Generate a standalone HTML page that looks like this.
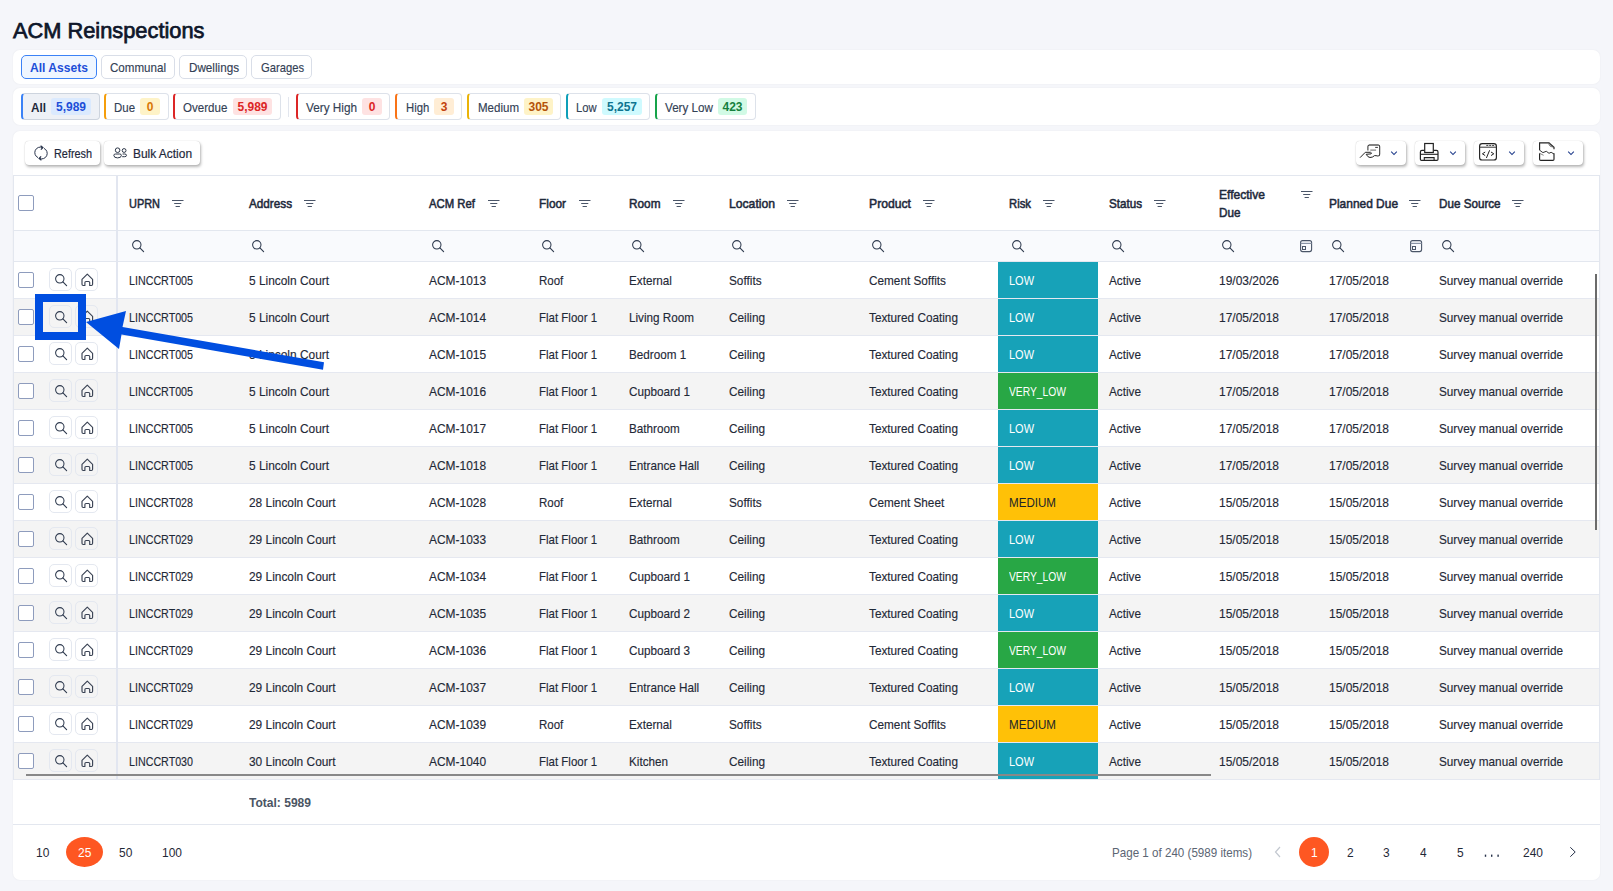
<!DOCTYPE html><html><head><meta charset="utf-8"><title>ACM Reinspections</title><style>
*{box-sizing:border-box;margin:0;padding:0}
html,body{width:1613px;height:891px;overflow:hidden}
body{background:#f5f6fa;font-family:"Liberation Sans",sans-serif;color:#1f2937;position:relative}
.a{position:absolute}
.t{position:absolute;white-space:nowrap}
.panel{position:absolute;left:13px;width:1587px;background:#fff;border-radius:7px;box-shadow:0 0 2px rgba(0,0,0,.06)}
.tab{position:absolute;top:55px;height:24px;border:1px solid #d9dee8;border-radius:5px;background:#fff}
.tab.on{border-color:#3b82f6;background:#eff6ff}
.chip{position:absolute;top:93px;height:27px;border:1px solid #dde2ea;border-left-width:2px;border-radius:4px;background:#fff}
.badge{position:absolute;top:98px;height:17px;border-radius:3px}
.btn{position:absolute;top:141px;height:24px;background:#fff;border-radius:4px;box-shadow:0 0 1px rgba(0,0,0,.25),1px 2px 3px rgba(0,0,0,.28)}
.row{position:absolute;left:14px;width:1585px;height:37px;border-bottom:1px solid #e5e8f0}
.cb{position:absolute;width:16px;height:16px;border:1.5px solid #8e9cbd;border-radius:2px;background:#fff}
.ab{position:absolute;width:23px;height:23px;border:1px solid #e4e8f0;border-radius:5px}
.ic{position:absolute;line-height:0}
</style></head><body>

<div class="t" style="left:13.00px;top:13.99px;font-size:22.4px;line-height:34px;color:#0f172a;transform:scaleX(0.9736);transform-origin:0 0;-webkit-text-stroke:0.75px #0f172a;">ACM Reinspections</div>
<div class="panel" style="top:50px;height:34px"></div>
<div class="tab on" style="left:21px;width:76px"></div>
<div class="t" style="left:30.30px;top:57.85px;font-size:13px;line-height:20px;font-weight:bold;color:#1d4ed8;transform:scaleX(0.9295);transform-origin:0 0;">All Assets</div>
<div class="tab" style="left:101px;width:74px"></div>
<div class="t" style="left:110.00px;top:57.85px;font-size:13px;line-height:20px;color:#334155;transform:scaleX(0.8910);transform-origin:0 0;-webkit-text-stroke:0.15px #334155;">Communal</div>
<div class="tab" style="left:179px;width:68px"></div>
<div class="t" style="left:188.50px;top:57.85px;font-size:13px;line-height:20px;color:#334155;transform:scaleX(0.8985);transform-origin:0 0;-webkit-text-stroke:0.15px #334155;">Dwellings</div>
<div class="tab" style="left:251px;width:61px"></div>
<div class="t" style="left:260.80px;top:57.85px;font-size:13px;line-height:20px;color:#334155;transform:scaleX(0.8626);transform-origin:0 0;-webkit-text-stroke:0.15px #334155;">Garages</div>
<div class="panel" style="top:88px;height:37px"></div>
<div class="chip" style="left:21px;width:79px;border-left-color:#3b82f6;background:#eef1f6;border-color:#cdd4de;border-left-color:#3b82f6;"></div>
<div class="t" style="left:31.00px;top:97.85px;font-size:13px;line-height:20px;font-weight:bold;color:#1e293b;transform:scaleX(0.9036);transform-origin:0 0;">All</div>
<div class="badge" style="left:51px;width:40px;background:#dbeafe"></div>
<div class="t" style="left:55.98px;top:98.19px;font-size:12px;line-height:18px;font-weight:bold;color:#1d4ed8;">5,989</div>
<div class="chip" style="left:104px;width:65px;border-left-color:#f59e0b;"></div>
<div class="t" style="left:114.30px;top:97.85px;font-size:13px;line-height:20px;color:#334155;transform:scaleX(0.8805);transform-origin:0 0;-webkit-text-stroke:0.15px #334155;">Due</div>
<div class="badge" style="left:140px;width:20px;background:#fef3c7"></div>
<div class="t" style="left:146.68px;top:98.19px;font-size:12px;line-height:18px;font-weight:bold;color:#d97706;">0</div>
<div class="chip" style="left:173px;width:108px;border-left-color:#dc2626;"></div>
<div class="t" style="left:183.40px;top:97.85px;font-size:13px;line-height:20px;color:#334155;transform:scaleX(0.8887);transform-origin:0 0;-webkit-text-stroke:0.15px #334155;">Overdue</div>
<div class="badge" style="left:233px;width:39px;background:#fee2e2"></div>
<div class="t" style="left:237.47px;top:98.19px;font-size:12px;line-height:18px;font-weight:bold;color:#dc2626;">5,989</div>
<div class="chip" style="left:296px;width:94px;border-left-color:#dc2626;"></div>
<div class="t" style="left:305.80px;top:97.85px;font-size:13px;line-height:20px;color:#334155;transform:scaleX(0.9051);transform-origin:0 0;-webkit-text-stroke:0.15px #334155;">Very High</div>
<div class="badge" style="left:362px;width:20px;background:#fee2e2"></div>
<div class="t" style="left:368.68px;top:98.19px;font-size:12px;line-height:18px;font-weight:bold;color:#dc2626;">0</div>
<div class="chip" style="left:395px;width:67px;border-left-color:#f97316;"></div>
<div class="t" style="left:405.70px;top:97.85px;font-size:13px;line-height:20px;color:#334155;transform:scaleX(0.8710);transform-origin:0 0;-webkit-text-stroke:0.15px #334155;">High</div>
<div class="badge" style="left:434px;width:20px;background:#ffedd5"></div>
<div class="t" style="left:440.68px;top:98.19px;font-size:12px;line-height:18px;font-weight:bold;color:#c2410c;">3</div>
<div class="chip" style="left:467px;width:94px;border-left-color:#eab308;"></div>
<div class="t" style="left:477.60px;top:97.85px;font-size:13px;line-height:20px;color:#334155;transform:scaleX(0.8865);transform-origin:0 0;-webkit-text-stroke:0.15px #334155;">Medium</div>
<div class="badge" style="left:524px;width:29px;background:#fef3c7"></div>
<div class="t" style="left:528.50px;top:98.19px;font-size:12px;line-height:18px;font-weight:bold;color:#b45309;">305</div>
<div class="chip" style="left:566px;width:84px;border-left-color:#0e9fb8;"></div>
<div class="t" style="left:576.30px;top:97.85px;font-size:13px;line-height:20px;color:#334155;transform:scaleX(0.8661);transform-origin:0 0;-webkit-text-stroke:0.15px #334155;">Low</div>
<div class="badge" style="left:602px;width:40px;background:#cffafe"></div>
<div class="t" style="left:606.98px;top:98.19px;font-size:12px;line-height:18px;font-weight:bold;color:#0e7490;">5,257</div>
<div class="chip" style="left:655px;width:101px;border-left-color:#16a34a;"></div>
<div class="t" style="left:664.90px;top:97.85px;font-size:13px;line-height:20px;color:#334155;transform:scaleX(0.8964);transform-origin:0 0;-webkit-text-stroke:0.15px #334155;">Very Low</div>
<div class="badge" style="left:718px;width:29px;background:#d1fae5"></div>
<div class="t" style="left:722.50px;top:98.19px;font-size:12px;line-height:18px;font-weight:bold;color:#15803d;">423</div>
<div class="a" style="left:288px;top:97px;width:1px;height:20px;background:#e2e6ee"></div>
<div class="panel" style="top:131px;height:749px"></div>
<div class="btn" style="left:25px;width:75px"></div>
<span class="ic" style="left:34px;top:145px"><svg width="14" height="16" viewBox="0 0 14 16"><path d="M8.6 2.6A5.4 5.4 0 0 0 4 12.6" fill="none" stroke="#27324a" stroke-width="1"/><path d="M5.4 13.4A5.4 5.4 0 0 0 10 3.4" fill="none" stroke="#27324a" stroke-width="1"/><path d="M6.6 0.8L8.9 2.5L6.9 4.6" fill="none" stroke="#27324a" stroke-width="1.2"/><path d="M7.4 15.2L5.1 13.5L7.1 11.4" fill="none" stroke="#27324a" stroke-width="1.2"/></svg></span>
<div class="t" style="left:53.80px;top:143.85px;font-size:13px;line-height:20px;color:#1e293b;transform:scaleX(0.8352);transform-origin:0 0;-webkit-text-stroke:0.2px #1e293b;">Refresh</div>
<div class="btn" style="left:104px;width:96px"></div>
<span class="ic" style="left:104px;top:140px"><svg width="50" height="24" viewBox="0 0 50 24"><circle cx="13.6" cy="10.2" r="2.3" fill="none" stroke="#2d3748" stroke-width="1"/><path d="M9.8 15.3Q9.8 14 11.6 14H15.6Q17.4 14 17.4 15.3Q17.4 17.9 13.6 17.9Q9.8 17.9 9.8 15.3Z" fill="none" stroke="#2d3748" stroke-width="1"/><circle cx="20.1" cy="10.5" r="1.9" fill="none" stroke="#2d3748" stroke-width="1"/><path d="M18.6 14H20.7Q22.5 14 22.5 15.3Q22.5 16.7 20.7 16.7H18.2" fill="none" stroke="#2d3748" stroke-width="1"/></svg></span>
<div class="t" style="left:132.80px;top:143.85px;font-size:13px;line-height:20px;color:#1e293b;transform:scaleX(0.9176);transform-origin:0 0;-webkit-text-stroke:0.2px #1e293b;">Bulk Action</div>
<div class="btn" style="left:1356px;width:50px"></div>
<span class="ic" style="left:1356px;top:140px"><svg width="50" height="24" viewBox="0 0 50 24"><path d="M35.2 11.6L38 14.6L40.8 11.6" fill="none" stroke="#1e3a8a" stroke-width="1.05"/><path d="M11.9 10.6V6.6Q11.9 4.9 13.6 4.9H22Q23.7 4.9 23.7 6.6V14.2Q23.7 15.9 22 15.9H21.4" fill="none" stroke="#333" stroke-width="1.05"/><path d="M13 5H22.6" stroke="#777" stroke-width="1.3"/><path d="M19.2 7.4H21.9" stroke="#222" stroke-width="0.9"/><path d="M14.3 10.1H20.1" stroke="#777" stroke-width="1.1"/><path d="M4 17.7L9.3 12.3H14.6Q16.2 12.8 15 13.9L10.2 14.3Q11.8 17.4 14 17.5Q16.5 17.6 18.6 15.6Q20 15.6 21.5 15.9" fill="none" stroke="#222" stroke-width="1"/></svg></span>
<div class="btn" style="left:1415px;width:50px"></div>
<span class="ic" style="left:1415px;top:140px"><svg width="50" height="24" viewBox="0 0 50 24"><path d="M35.2 11.6L38 14.6L40.8 11.6" fill="none" stroke="#1e3a8a" stroke-width="1.05"/><rect x="9.7" y="3.5" width="8.6" height="9" fill="none" stroke="#222" stroke-width="1.2"/><path d="M9.2 10.3H7Q5.4 10.3 5.4 12V19.2Q5.4 20.3 6.5 20.3H21.9Q23 20.3 23 19.2V12Q23 10.3 21.4 10.3H18.8" fill="none" stroke="#222" stroke-width="1.2"/><path d="M5.4 14.3H23" stroke="#222" stroke-width="1.1"/><path d="M9.3 20.2V17.6H19.1V20.2" fill="none" stroke="#222" stroke-width="1.1"/></svg></span>
<div class="btn" style="left:1474px;width:50px"></div>
<span class="ic" style="left:1474px;top:140px"><svg width="50" height="24" viewBox="0 0 50 24"><path d="M35.2 11.6L38 14.6L40.8 11.6" fill="none" stroke="#1e3a8a" stroke-width="1.05"/><rect x="5.6" y="3.6" width="16.8" height="16.4" rx="2.6" fill="none" stroke="#222" stroke-width="1.15"/><path d="M5.6 7.2H22.4" stroke="#333" stroke-width="1"/><path d="M12.3 5.4H21.1" stroke="#222" stroke-width="0.9" stroke-dasharray="2 0.9"/><path d="M11.2 12L8.4 13.8L11.2 15.6M17 12L19.8 13.8L17 15.6M15.6 10.3L12.4 18" fill="none" stroke="#222" stroke-width="1"/></svg></span>
<div class="btn" style="left:1533px;width:50px"></div>
<span class="ic" style="left:1533px;top:140px"><svg width="50" height="24" viewBox="0 0 50 24"><path d="M35.2 11.6L38 14.6L40.8 11.6" fill="none" stroke="#1e3a8a" stroke-width="1.05"/><path d="M6.6 10.2V2.9H16L21 7.2V9.2M21 13.3V19.2Q21 20.3 19.9 20.3H7.7Q6.6 20.3 6.6 19.2V13.3" fill="none" stroke="#222" stroke-width="1.15"/><path d="M16 2.9Q15.6 6.8 20.8 7" fill="none" stroke="#555" stroke-width="1"/><path d="M6.6 10.2L9.9 12.6L13.3 11.3L16 13.3L18.1 12.3L21 14" fill="none" stroke="#333" stroke-width="1"/><path d="M6.6 13.3L10.6 15.3" fill="none" stroke="#777" stroke-width="0.9"/></svg></span>
<div class="a" style="left:13px;top:175px;width:1587px;height:1px;background:#e3e7ef"></div>
<div class="a" style="left:13px;top:175px;width:1px;height:605px;background:#e3e7ef"></div>
<div class="a" style="left:1599px;top:175px;width:1px;height:605px;background:#e3e7ef"></div>
<div class="a" style="left:14px;top:230px;width:1585px;height:1px;background:#e3e7ef"></div>
<div class="a" style="left:14px;top:231px;width:1585px;height:30px;background:#f9fafd"></div>
<div class="a" style="left:14px;top:261px;width:1585px;height:1px;background:#e3e7ef"></div>
<div class="cb" style="left:18px;top:195px"></div>
<div class="t" style="left:129.00px;top:193.85px;font-size:13px;line-height:20px;color:#1e293b;transform:scaleX(0.8412);transform-origin:0 0;-webkit-text-stroke:0.55px #1e293b;">UPRN</div>
<span class="ic" style="left:172px;top:200px"><svg width="12" height="8" viewBox="0 0 12 8"><path d="M0 0.5H11.5M2.2 3.5H9.3M3.6 6.5H7.9" stroke="#4a5568" stroke-width="1"/></svg></span>
<span class="ic" style="left:132px;top:240px"><svg width="13" height="13" viewBox="0 0 13 13"><circle cx="4.8" cy="4.8" r="4.2" fill="none" stroke="#2f3b4f" stroke-width="1.05"/><path d="M7.9 7.9L11.6 11.6" stroke="#2f3b4f" stroke-width="1.15" stroke-linecap="round"/></svg></span>
<div class="t" style="left:249.00px;top:193.85px;font-size:13px;line-height:20px;color:#1e293b;transform:scaleX(0.9015);transform-origin:0 0;-webkit-text-stroke:0.55px #1e293b;">Address</div>
<span class="ic" style="left:304px;top:200px"><svg width="12" height="8" viewBox="0 0 12 8"><path d="M0 0.5H11.5M2.2 3.5H9.3M3.6 6.5H7.9" stroke="#4a5568" stroke-width="1"/></svg></span>
<span class="ic" style="left:252px;top:240px"><svg width="13" height="13" viewBox="0 0 13 13"><circle cx="4.8" cy="4.8" r="4.2" fill="none" stroke="#2f3b4f" stroke-width="1.05"/><path d="M7.9 7.9L11.6 11.6" stroke="#2f3b4f" stroke-width="1.15" stroke-linecap="round"/></svg></span>
<div class="t" style="left:429.00px;top:193.85px;font-size:13px;line-height:20px;color:#1e293b;transform:scaleX(0.8720);transform-origin:0 0;-webkit-text-stroke:0.55px #1e293b;">ACM Ref</div>
<span class="ic" style="left:488px;top:200px"><svg width="12" height="8" viewBox="0 0 12 8"><path d="M0 0.5H11.5M2.2 3.5H9.3M3.6 6.5H7.9" stroke="#4a5568" stroke-width="1"/></svg></span>
<span class="ic" style="left:432px;top:240px"><svg width="13" height="13" viewBox="0 0 13 13"><circle cx="4.8" cy="4.8" r="4.2" fill="none" stroke="#2f3b4f" stroke-width="1.05"/><path d="M7.9 7.9L11.6 11.6" stroke="#2f3b4f" stroke-width="1.15" stroke-linecap="round"/></svg></span>
<div class="t" style="left:539.00px;top:193.85px;font-size:13px;line-height:20px;color:#1e293b;transform:scaleX(0.9122);transform-origin:0 0;-webkit-text-stroke:0.55px #1e293b;">Floor</div>
<span class="ic" style="left:579px;top:200px"><svg width="12" height="8" viewBox="0 0 12 8"><path d="M0 0.5H11.5M2.2 3.5H9.3M3.6 6.5H7.9" stroke="#4a5568" stroke-width="1"/></svg></span>
<span class="ic" style="left:542px;top:240px"><svg width="13" height="13" viewBox="0 0 13 13"><circle cx="4.8" cy="4.8" r="4.2" fill="none" stroke="#2f3b4f" stroke-width="1.05"/><path d="M7.9 7.9L11.6 11.6" stroke="#2f3b4f" stroke-width="1.15" stroke-linecap="round"/></svg></span>
<div class="t" style="left:629.00px;top:193.85px;font-size:13px;line-height:20px;color:#1e293b;transform:scaleX(0.9078);transform-origin:0 0;-webkit-text-stroke:0.55px #1e293b;">Room</div>
<span class="ic" style="left:673px;top:200px"><svg width="12" height="8" viewBox="0 0 12 8"><path d="M0 0.5H11.5M2.2 3.5H9.3M3.6 6.5H7.9" stroke="#4a5568" stroke-width="1"/></svg></span>
<span class="ic" style="left:632px;top:240px"><svg width="13" height="13" viewBox="0 0 13 13"><circle cx="4.8" cy="4.8" r="4.2" fill="none" stroke="#2f3b4f" stroke-width="1.05"/><path d="M7.9 7.9L11.6 11.6" stroke="#2f3b4f" stroke-width="1.15" stroke-linecap="round"/></svg></span>
<div class="t" style="left:729.00px;top:193.85px;font-size:13px;line-height:20px;color:#1e293b;transform:scaleX(0.9359);transform-origin:0 0;-webkit-text-stroke:0.55px #1e293b;">Location</div>
<span class="ic" style="left:787px;top:200px"><svg width="12" height="8" viewBox="0 0 12 8"><path d="M0 0.5H11.5M2.2 3.5H9.3M3.6 6.5H7.9" stroke="#4a5568" stroke-width="1"/></svg></span>
<span class="ic" style="left:732px;top:240px"><svg width="13" height="13" viewBox="0 0 13 13"><circle cx="4.8" cy="4.8" r="4.2" fill="none" stroke="#2f3b4f" stroke-width="1.05"/><path d="M7.9 7.9L11.6 11.6" stroke="#2f3b4f" stroke-width="1.15" stroke-linecap="round"/></svg></span>
<div class="t" style="left:869.00px;top:193.85px;font-size:13px;line-height:20px;color:#1e293b;transform:scaleX(0.9375);transform-origin:0 0;-webkit-text-stroke:0.55px #1e293b;">Product</div>
<span class="ic" style="left:923px;top:200px"><svg width="12" height="8" viewBox="0 0 12 8"><path d="M0 0.5H11.5M2.2 3.5H9.3M3.6 6.5H7.9" stroke="#4a5568" stroke-width="1"/></svg></span>
<span class="ic" style="left:872px;top:240px"><svg width="13" height="13" viewBox="0 0 13 13"><circle cx="4.8" cy="4.8" r="4.2" fill="none" stroke="#2f3b4f" stroke-width="1.05"/><path d="M7.9 7.9L11.6 11.6" stroke="#2f3b4f" stroke-width="1.15" stroke-linecap="round"/></svg></span>
<div class="t" style="left:1009.00px;top:193.85px;font-size:13px;line-height:20px;color:#1e293b;transform:scaleX(0.8679);transform-origin:0 0;-webkit-text-stroke:0.55px #1e293b;">Risk</div>
<span class="ic" style="left:1043px;top:200px"><svg width="12" height="8" viewBox="0 0 12 8"><path d="M0 0.5H11.5M2.2 3.5H9.3M3.6 6.5H7.9" stroke="#4a5568" stroke-width="1"/></svg></span>
<span class="ic" style="left:1012px;top:240px"><svg width="13" height="13" viewBox="0 0 13 13"><circle cx="4.8" cy="4.8" r="4.2" fill="none" stroke="#2f3b4f" stroke-width="1.05"/><path d="M7.9 7.9L11.6 11.6" stroke="#2f3b4f" stroke-width="1.15" stroke-linecap="round"/></svg></span>
<div class="t" style="left:1109.00px;top:193.85px;font-size:13px;line-height:20px;color:#1e293b;transform:scaleX(0.8955);transform-origin:0 0;-webkit-text-stroke:0.55px #1e293b;">Status</div>
<span class="ic" style="left:1154px;top:200px"><svg width="12" height="8" viewBox="0 0 12 8"><path d="M0 0.5H11.5M2.2 3.5H9.3M3.6 6.5H7.9" stroke="#4a5568" stroke-width="1"/></svg></span>
<span class="ic" style="left:1112px;top:240px"><svg width="13" height="13" viewBox="0 0 13 13"><circle cx="4.8" cy="4.8" r="4.2" fill="none" stroke="#2f3b4f" stroke-width="1.05"/><path d="M7.9 7.9L11.6 11.6" stroke="#2f3b4f" stroke-width="1.15" stroke-linecap="round"/></svg></span>
<div class="t" style="left:1219.00px;top:184.85px;font-size:13px;line-height:20px;color:#1e293b;transform:scaleX(0.9274);transform-origin:0 0;-webkit-text-stroke:0.55px #1e293b;">Effective</div>
<div class="t" style="left:1219.00px;top:202.85px;font-size:13px;line-height:20px;color:#1e293b;transform:scaleX(0.9015);transform-origin:0 0;-webkit-text-stroke:0.55px #1e293b;">Due</div>
<span class="ic" style="left:1301px;top:191px"><svg width="12" height="8" viewBox="0 0 12 8"><path d="M0 0.5H11.5M2.2 3.5H9.3M3.6 6.5H7.9" stroke="#4a5568" stroke-width="1"/></svg></span>
<span class="ic" style="left:1222px;top:240px"><svg width="13" height="13" viewBox="0 0 13 13"><circle cx="4.8" cy="4.8" r="4.2" fill="none" stroke="#2f3b4f" stroke-width="1.05"/><path d="M7.9 7.9L11.6 11.6" stroke="#2f3b4f" stroke-width="1.15" stroke-linecap="round"/></svg></span>
<div class="t" style="left:1329.00px;top:193.85px;font-size:13px;line-height:20px;color:#1e293b;transform:scaleX(0.9182);transform-origin:0 0;-webkit-text-stroke:0.55px #1e293b;">Planned Due</div>
<span class="ic" style="left:1409px;top:200px"><svg width="12" height="8" viewBox="0 0 12 8"><path d="M0 0.5H11.5M2.2 3.5H9.3M3.6 6.5H7.9" stroke="#4a5568" stroke-width="1"/></svg></span>
<span class="ic" style="left:1332px;top:240px"><svg width="13" height="13" viewBox="0 0 13 13"><circle cx="4.8" cy="4.8" r="4.2" fill="none" stroke="#2f3b4f" stroke-width="1.05"/><path d="M7.9 7.9L11.6 11.6" stroke="#2f3b4f" stroke-width="1.15" stroke-linecap="round"/></svg></span>
<div class="t" style="left:1439.00px;top:193.85px;font-size:13px;line-height:20px;color:#1e293b;transform:scaleX(0.8973);transform-origin:0 0;-webkit-text-stroke:0.55px #1e293b;">Due Source</div>
<span class="ic" style="left:1512px;top:200px"><svg width="12" height="8" viewBox="0 0 12 8"><path d="M0 0.5H11.5M2.2 3.5H9.3M3.6 6.5H7.9" stroke="#4a5568" stroke-width="1"/></svg></span>
<span class="ic" style="left:1442px;top:240px"><svg width="13" height="13" viewBox="0 0 13 13"><circle cx="4.8" cy="4.8" r="4.2" fill="none" stroke="#2f3b4f" stroke-width="1.05"/><path d="M7.9 7.9L11.6 11.6" stroke="#2f3b4f" stroke-width="1.15" stroke-linecap="round"/></svg></span>
<span class="ic" style="left:1300px;top:240px"><svg width="13" height="13" viewBox="0 0 13 13"><rect x="0.6" y="0.6" width="11" height="11" rx="2" fill="none" stroke="#4a5568" stroke-width="1.1"/><path d="M0.6 3.4H11.6" stroke="#8a94a6" stroke-width="1.2"/><rect x="2.5" y="6.5" width="3" height="3" fill="none" stroke="#4a5568" stroke-width="1"/></svg></span>
<span class="ic" style="left:1410px;top:240px"><svg width="13" height="13" viewBox="0 0 13 13"><rect x="0.6" y="0.6" width="11" height="11" rx="2" fill="none" stroke="#4a5568" stroke-width="1.1"/><path d="M0.6 3.4H11.6" stroke="#8a94a6" stroke-width="1.2"/><rect x="2.5" y="6.5" width="3" height="3" fill="none" stroke="#4a5568" stroke-width="1"/></svg></span>
<div class="row" style="top:262px;background:#ffffff"></div>
<div class="cb" style="left:18px;top:272px"></div>
<div class="ab" style="left:49px;top:268px"></div><span class="ic" style="left:55px;top:274px"><svg width="13" height="13" viewBox="0 0 13 13"><circle cx="4.8" cy="4.8" r="4.2" fill="none" stroke="#2f3b4f" stroke-width="1.05"/><path d="M7.9 7.9L11.6 11.6" stroke="#2f3b4f" stroke-width="1.15" stroke-linecap="round"/></svg></span>
<div class="ab" style="left:75px;top:268px"></div><span class="ic" style="left:80.5px;top:273px"><svg width="13" height="14" viewBox="0 0 13 14"><path d="M1 6.3L6.3 1.2L11.6 6.3V11.3Q11.6 12.5 10.4 12.5H8.7V9.6Q8.7 8.5 7.6 8.5H5Q3.9 8.5 3.9 9.6V12.5H2.2Q1 12.5 1 11.3Z" fill="none" stroke="#3a4354" stroke-width="1.15" stroke-linejoin="round"/></svg></span>
<div class="t" style="left:129.00px;top:270.85px;font-size:13px;line-height:20px;color:#1f2937;transform:scaleX(0.8230);transform-origin:0 0;-webkit-text-stroke:0.15px #1f2937;">LINCCRT005</div>
<div class="t" style="left:249.00px;top:270.85px;font-size:13px;line-height:20px;color:#1f2937;transform:scaleX(0.9150);transform-origin:0 0;-webkit-text-stroke:0.15px #1f2937;">5 Lincoln Court</div>
<div class="t" style="left:429.00px;top:270.85px;font-size:13px;line-height:20px;color:#1f2937;transform:scaleX(0.9180);transform-origin:0 0;-webkit-text-stroke:0.15px #1f2937;">ACM-1013</div>
<div class="t" style="left:539.00px;top:270.85px;font-size:13px;line-height:20px;color:#1f2937;transform:scaleX(0.8830);transform-origin:0 0;-webkit-text-stroke:0.15px #1f2937;">Roof</div>
<div class="t" style="left:629.00px;top:270.85px;font-size:13px;line-height:20px;color:#1f2937;transform:scaleX(0.8990);transform-origin:0 0;-webkit-text-stroke:0.15px #1f2937;">External</div>
<div class="t" style="left:729.00px;top:270.85px;font-size:13px;line-height:20px;color:#1f2937;transform:scaleX(0.9070);transform-origin:0 0;-webkit-text-stroke:0.15px #1f2937;">Soffits</div>
<div class="t" style="left:869.00px;top:270.85px;font-size:13px;line-height:20px;color:#1f2937;transform:scaleX(0.9050);transform-origin:0 0;-webkit-text-stroke:0.15px #1f2937;">Cement Soffits</div>
<div class="a" style="left:998px;top:262px;width:100px;height:36px;background:#17a2b8"></div>
<div class="t" style="left:1009.00px;top:270.85px;font-size:13px;line-height:20px;color:#ffffff;transform:scaleX(0.8446);transform-origin:0 0;">LOW</div>
<div class="t" style="left:1109.00px;top:270.85px;font-size:13px;line-height:20px;color:#1f2937;transform:scaleX(0.9040);transform-origin:0 0;-webkit-text-stroke:0.15px #1f2937;">Active</div>
<div class="t" style="left:1219.00px;top:270.85px;font-size:13px;line-height:20px;color:#1f2937;transform:scaleX(0.9220);transform-origin:0 0;-webkit-text-stroke:0.15px #1f2937;">19/03/2026</div>
<div class="t" style="left:1329.00px;top:270.85px;font-size:13px;line-height:20px;color:#1f2937;transform:scaleX(0.9220);transform-origin:0 0;-webkit-text-stroke:0.15px #1f2937;">17/05/2018</div>
<div class="t" style="left:1439.00px;top:270.85px;font-size:13px;line-height:20px;color:#1f2937;transform:scaleX(0.9030);transform-origin:0 0;-webkit-text-stroke:0.15px #1f2937;">Survey manual override</div>
<div class="row" style="top:299px;background:#f4f4f4"></div>
<div class="cb" style="left:18px;top:309px"></div>
<div class="ab" style="left:49px;top:305px"></div><span class="ic" style="left:55px;top:311px"><svg width="13" height="13" viewBox="0 0 13 13"><circle cx="4.8" cy="4.8" r="4.2" fill="none" stroke="#2f3b4f" stroke-width="1.05"/><path d="M7.9 7.9L11.6 11.6" stroke="#2f3b4f" stroke-width="1.15" stroke-linecap="round"/></svg></span>
<div class="ab" style="left:75px;top:305px"></div><span class="ic" style="left:80.5px;top:310px"><svg width="13" height="14" viewBox="0 0 13 14"><path d="M1 6.3L6.3 1.2L11.6 6.3V11.3Q11.6 12.5 10.4 12.5H8.7V9.6Q8.7 8.5 7.6 8.5H5Q3.9 8.5 3.9 9.6V12.5H2.2Q1 12.5 1 11.3Z" fill="none" stroke="#3a4354" stroke-width="1.15" stroke-linejoin="round"/></svg></span>
<div class="t" style="left:129.00px;top:307.85px;font-size:13px;line-height:20px;color:#1f2937;transform:scaleX(0.8230);transform-origin:0 0;-webkit-text-stroke:0.15px #1f2937;">LINCCRT005</div>
<div class="t" style="left:249.00px;top:307.85px;font-size:13px;line-height:20px;color:#1f2937;transform:scaleX(0.9150);transform-origin:0 0;-webkit-text-stroke:0.15px #1f2937;">5 Lincoln Court</div>
<div class="t" style="left:429.00px;top:307.85px;font-size:13px;line-height:20px;color:#1f2937;transform:scaleX(0.9180);transform-origin:0 0;-webkit-text-stroke:0.15px #1f2937;">ACM-1014</div>
<div class="t" style="left:539.00px;top:307.85px;font-size:13px;line-height:20px;color:#1f2937;transform:scaleX(0.8830);transform-origin:0 0;-webkit-text-stroke:0.15px #1f2937;">Flat Floor 1</div>
<div class="t" style="left:629.00px;top:307.85px;font-size:13px;line-height:20px;color:#1f2937;transform:scaleX(0.8990);transform-origin:0 0;-webkit-text-stroke:0.15px #1f2937;">Living Room</div>
<div class="t" style="left:729.00px;top:307.85px;font-size:13px;line-height:20px;color:#1f2937;transform:scaleX(0.9070);transform-origin:0 0;-webkit-text-stroke:0.15px #1f2937;">Ceiling</div>
<div class="t" style="left:869.00px;top:307.85px;font-size:13px;line-height:20px;color:#1f2937;transform:scaleX(0.9050);transform-origin:0 0;-webkit-text-stroke:0.15px #1f2937;">Textured Coating</div>
<div class="a" style="left:998px;top:299px;width:100px;height:36px;background:#17a2b8"></div>
<div class="t" style="left:1009.00px;top:307.85px;font-size:13px;line-height:20px;color:#ffffff;transform:scaleX(0.8446);transform-origin:0 0;">LOW</div>
<div class="t" style="left:1109.00px;top:307.85px;font-size:13px;line-height:20px;color:#1f2937;transform:scaleX(0.9040);transform-origin:0 0;-webkit-text-stroke:0.15px #1f2937;">Active</div>
<div class="t" style="left:1219.00px;top:307.85px;font-size:13px;line-height:20px;color:#1f2937;transform:scaleX(0.9220);transform-origin:0 0;-webkit-text-stroke:0.15px #1f2937;">17/05/2018</div>
<div class="t" style="left:1329.00px;top:307.85px;font-size:13px;line-height:20px;color:#1f2937;transform:scaleX(0.9220);transform-origin:0 0;-webkit-text-stroke:0.15px #1f2937;">17/05/2018</div>
<div class="t" style="left:1439.00px;top:307.85px;font-size:13px;line-height:20px;color:#1f2937;transform:scaleX(0.9030);transform-origin:0 0;-webkit-text-stroke:0.15px #1f2937;">Survey manual override</div>
<div class="row" style="top:336px;background:#ffffff"></div>
<div class="cb" style="left:18px;top:346px"></div>
<div class="ab" style="left:49px;top:342px"></div><span class="ic" style="left:55px;top:348px"><svg width="13" height="13" viewBox="0 0 13 13"><circle cx="4.8" cy="4.8" r="4.2" fill="none" stroke="#2f3b4f" stroke-width="1.05"/><path d="M7.9 7.9L11.6 11.6" stroke="#2f3b4f" stroke-width="1.15" stroke-linecap="round"/></svg></span>
<div class="ab" style="left:75px;top:342px"></div><span class="ic" style="left:80.5px;top:347px"><svg width="13" height="14" viewBox="0 0 13 14"><path d="M1 6.3L6.3 1.2L11.6 6.3V11.3Q11.6 12.5 10.4 12.5H8.7V9.6Q8.7 8.5 7.6 8.5H5Q3.9 8.5 3.9 9.6V12.5H2.2Q1 12.5 1 11.3Z" fill="none" stroke="#3a4354" stroke-width="1.15" stroke-linejoin="round"/></svg></span>
<div class="t" style="left:129.00px;top:344.85px;font-size:13px;line-height:20px;color:#1f2937;transform:scaleX(0.8230);transform-origin:0 0;-webkit-text-stroke:0.15px #1f2937;">LINCCRT005</div>
<div class="t" style="left:249.00px;top:344.85px;font-size:13px;line-height:20px;color:#1f2937;transform:scaleX(0.9150);transform-origin:0 0;-webkit-text-stroke:0.15px #1f2937;">5 Lincoln Court</div>
<div class="t" style="left:429.00px;top:344.85px;font-size:13px;line-height:20px;color:#1f2937;transform:scaleX(0.9180);transform-origin:0 0;-webkit-text-stroke:0.15px #1f2937;">ACM-1015</div>
<div class="t" style="left:539.00px;top:344.85px;font-size:13px;line-height:20px;color:#1f2937;transform:scaleX(0.8830);transform-origin:0 0;-webkit-text-stroke:0.15px #1f2937;">Flat Floor 1</div>
<div class="t" style="left:629.00px;top:344.85px;font-size:13px;line-height:20px;color:#1f2937;transform:scaleX(0.8990);transform-origin:0 0;-webkit-text-stroke:0.15px #1f2937;">Bedroom 1</div>
<div class="t" style="left:729.00px;top:344.85px;font-size:13px;line-height:20px;color:#1f2937;transform:scaleX(0.9070);transform-origin:0 0;-webkit-text-stroke:0.15px #1f2937;">Ceiling</div>
<div class="t" style="left:869.00px;top:344.85px;font-size:13px;line-height:20px;color:#1f2937;transform:scaleX(0.9050);transform-origin:0 0;-webkit-text-stroke:0.15px #1f2937;">Textured Coating</div>
<div class="a" style="left:998px;top:336px;width:100px;height:36px;background:#17a2b8"></div>
<div class="t" style="left:1009.00px;top:344.85px;font-size:13px;line-height:20px;color:#ffffff;transform:scaleX(0.8446);transform-origin:0 0;">LOW</div>
<div class="t" style="left:1109.00px;top:344.85px;font-size:13px;line-height:20px;color:#1f2937;transform:scaleX(0.9040);transform-origin:0 0;-webkit-text-stroke:0.15px #1f2937;">Active</div>
<div class="t" style="left:1219.00px;top:344.85px;font-size:13px;line-height:20px;color:#1f2937;transform:scaleX(0.9220);transform-origin:0 0;-webkit-text-stroke:0.15px #1f2937;">17/05/2018</div>
<div class="t" style="left:1329.00px;top:344.85px;font-size:13px;line-height:20px;color:#1f2937;transform:scaleX(0.9220);transform-origin:0 0;-webkit-text-stroke:0.15px #1f2937;">17/05/2018</div>
<div class="t" style="left:1439.00px;top:344.85px;font-size:13px;line-height:20px;color:#1f2937;transform:scaleX(0.9030);transform-origin:0 0;-webkit-text-stroke:0.15px #1f2937;">Survey manual override</div>
<div class="row" style="top:373px;background:#f4f4f4"></div>
<div class="cb" style="left:18px;top:383px"></div>
<div class="ab" style="left:49px;top:379px"></div><span class="ic" style="left:55px;top:385px"><svg width="13" height="13" viewBox="0 0 13 13"><circle cx="4.8" cy="4.8" r="4.2" fill="none" stroke="#2f3b4f" stroke-width="1.05"/><path d="M7.9 7.9L11.6 11.6" stroke="#2f3b4f" stroke-width="1.15" stroke-linecap="round"/></svg></span>
<div class="ab" style="left:75px;top:379px"></div><span class="ic" style="left:80.5px;top:384px"><svg width="13" height="14" viewBox="0 0 13 14"><path d="M1 6.3L6.3 1.2L11.6 6.3V11.3Q11.6 12.5 10.4 12.5H8.7V9.6Q8.7 8.5 7.6 8.5H5Q3.9 8.5 3.9 9.6V12.5H2.2Q1 12.5 1 11.3Z" fill="none" stroke="#3a4354" stroke-width="1.15" stroke-linejoin="round"/></svg></span>
<div class="t" style="left:129.00px;top:381.85px;font-size:13px;line-height:20px;color:#1f2937;transform:scaleX(0.8230);transform-origin:0 0;-webkit-text-stroke:0.15px #1f2937;">LINCCRT005</div>
<div class="t" style="left:249.00px;top:381.85px;font-size:13px;line-height:20px;color:#1f2937;transform:scaleX(0.9150);transform-origin:0 0;-webkit-text-stroke:0.15px #1f2937;">5 Lincoln Court</div>
<div class="t" style="left:429.00px;top:381.85px;font-size:13px;line-height:20px;color:#1f2937;transform:scaleX(0.9180);transform-origin:0 0;-webkit-text-stroke:0.15px #1f2937;">ACM-1016</div>
<div class="t" style="left:539.00px;top:381.85px;font-size:13px;line-height:20px;color:#1f2937;transform:scaleX(0.8830);transform-origin:0 0;-webkit-text-stroke:0.15px #1f2937;">Flat Floor 1</div>
<div class="t" style="left:629.00px;top:381.85px;font-size:13px;line-height:20px;color:#1f2937;transform:scaleX(0.8990);transform-origin:0 0;-webkit-text-stroke:0.15px #1f2937;">Cupboard 1</div>
<div class="t" style="left:729.00px;top:381.85px;font-size:13px;line-height:20px;color:#1f2937;transform:scaleX(0.9070);transform-origin:0 0;-webkit-text-stroke:0.15px #1f2937;">Ceiling</div>
<div class="t" style="left:869.00px;top:381.85px;font-size:13px;line-height:20px;color:#1f2937;transform:scaleX(0.9050);transform-origin:0 0;-webkit-text-stroke:0.15px #1f2937;">Textured Coating</div>
<div class="a" style="left:998px;top:373px;width:100px;height:36px;background:#28a745"></div>
<div class="t" style="left:1009.00px;top:381.85px;font-size:13px;line-height:20px;color:#ffffff;transform:scaleX(0.7917);transform-origin:0 0;">VERY_LOW</div>
<div class="t" style="left:1109.00px;top:381.85px;font-size:13px;line-height:20px;color:#1f2937;transform:scaleX(0.9040);transform-origin:0 0;-webkit-text-stroke:0.15px #1f2937;">Active</div>
<div class="t" style="left:1219.00px;top:381.85px;font-size:13px;line-height:20px;color:#1f2937;transform:scaleX(0.9220);transform-origin:0 0;-webkit-text-stroke:0.15px #1f2937;">17/05/2018</div>
<div class="t" style="left:1329.00px;top:381.85px;font-size:13px;line-height:20px;color:#1f2937;transform:scaleX(0.9220);transform-origin:0 0;-webkit-text-stroke:0.15px #1f2937;">17/05/2018</div>
<div class="t" style="left:1439.00px;top:381.85px;font-size:13px;line-height:20px;color:#1f2937;transform:scaleX(0.9030);transform-origin:0 0;-webkit-text-stroke:0.15px #1f2937;">Survey manual override</div>
<div class="row" style="top:410px;background:#ffffff"></div>
<div class="cb" style="left:18px;top:420px"></div>
<div class="ab" style="left:49px;top:416px"></div><span class="ic" style="left:55px;top:422px"><svg width="13" height="13" viewBox="0 0 13 13"><circle cx="4.8" cy="4.8" r="4.2" fill="none" stroke="#2f3b4f" stroke-width="1.05"/><path d="M7.9 7.9L11.6 11.6" stroke="#2f3b4f" stroke-width="1.15" stroke-linecap="round"/></svg></span>
<div class="ab" style="left:75px;top:416px"></div><span class="ic" style="left:80.5px;top:421px"><svg width="13" height="14" viewBox="0 0 13 14"><path d="M1 6.3L6.3 1.2L11.6 6.3V11.3Q11.6 12.5 10.4 12.5H8.7V9.6Q8.7 8.5 7.6 8.5H5Q3.9 8.5 3.9 9.6V12.5H2.2Q1 12.5 1 11.3Z" fill="none" stroke="#3a4354" stroke-width="1.15" stroke-linejoin="round"/></svg></span>
<div class="t" style="left:129.00px;top:418.85px;font-size:13px;line-height:20px;color:#1f2937;transform:scaleX(0.8230);transform-origin:0 0;-webkit-text-stroke:0.15px #1f2937;">LINCCRT005</div>
<div class="t" style="left:249.00px;top:418.85px;font-size:13px;line-height:20px;color:#1f2937;transform:scaleX(0.9150);transform-origin:0 0;-webkit-text-stroke:0.15px #1f2937;">5 Lincoln Court</div>
<div class="t" style="left:429.00px;top:418.85px;font-size:13px;line-height:20px;color:#1f2937;transform:scaleX(0.9180);transform-origin:0 0;-webkit-text-stroke:0.15px #1f2937;">ACM-1017</div>
<div class="t" style="left:539.00px;top:418.85px;font-size:13px;line-height:20px;color:#1f2937;transform:scaleX(0.8830);transform-origin:0 0;-webkit-text-stroke:0.15px #1f2937;">Flat Floor 1</div>
<div class="t" style="left:629.00px;top:418.85px;font-size:13px;line-height:20px;color:#1f2937;transform:scaleX(0.8990);transform-origin:0 0;-webkit-text-stroke:0.15px #1f2937;">Bathroom</div>
<div class="t" style="left:729.00px;top:418.85px;font-size:13px;line-height:20px;color:#1f2937;transform:scaleX(0.9070);transform-origin:0 0;-webkit-text-stroke:0.15px #1f2937;">Ceiling</div>
<div class="t" style="left:869.00px;top:418.85px;font-size:13px;line-height:20px;color:#1f2937;transform:scaleX(0.9050);transform-origin:0 0;-webkit-text-stroke:0.15px #1f2937;">Textured Coating</div>
<div class="a" style="left:998px;top:410px;width:100px;height:36px;background:#17a2b8"></div>
<div class="t" style="left:1009.00px;top:418.85px;font-size:13px;line-height:20px;color:#ffffff;transform:scaleX(0.8446);transform-origin:0 0;">LOW</div>
<div class="t" style="left:1109.00px;top:418.85px;font-size:13px;line-height:20px;color:#1f2937;transform:scaleX(0.9040);transform-origin:0 0;-webkit-text-stroke:0.15px #1f2937;">Active</div>
<div class="t" style="left:1219.00px;top:418.85px;font-size:13px;line-height:20px;color:#1f2937;transform:scaleX(0.9220);transform-origin:0 0;-webkit-text-stroke:0.15px #1f2937;">17/05/2018</div>
<div class="t" style="left:1329.00px;top:418.85px;font-size:13px;line-height:20px;color:#1f2937;transform:scaleX(0.9220);transform-origin:0 0;-webkit-text-stroke:0.15px #1f2937;">17/05/2018</div>
<div class="t" style="left:1439.00px;top:418.85px;font-size:13px;line-height:20px;color:#1f2937;transform:scaleX(0.9030);transform-origin:0 0;-webkit-text-stroke:0.15px #1f2937;">Survey manual override</div>
<div class="row" style="top:447px;background:#f4f4f4"></div>
<div class="cb" style="left:18px;top:457px"></div>
<div class="ab" style="left:49px;top:453px"></div><span class="ic" style="left:55px;top:459px"><svg width="13" height="13" viewBox="0 0 13 13"><circle cx="4.8" cy="4.8" r="4.2" fill="none" stroke="#2f3b4f" stroke-width="1.05"/><path d="M7.9 7.9L11.6 11.6" stroke="#2f3b4f" stroke-width="1.15" stroke-linecap="round"/></svg></span>
<div class="ab" style="left:75px;top:453px"></div><span class="ic" style="left:80.5px;top:458px"><svg width="13" height="14" viewBox="0 0 13 14"><path d="M1 6.3L6.3 1.2L11.6 6.3V11.3Q11.6 12.5 10.4 12.5H8.7V9.6Q8.7 8.5 7.6 8.5H5Q3.9 8.5 3.9 9.6V12.5H2.2Q1 12.5 1 11.3Z" fill="none" stroke="#3a4354" stroke-width="1.15" stroke-linejoin="round"/></svg></span>
<div class="t" style="left:129.00px;top:455.85px;font-size:13px;line-height:20px;color:#1f2937;transform:scaleX(0.8230);transform-origin:0 0;-webkit-text-stroke:0.15px #1f2937;">LINCCRT005</div>
<div class="t" style="left:249.00px;top:455.85px;font-size:13px;line-height:20px;color:#1f2937;transform:scaleX(0.9150);transform-origin:0 0;-webkit-text-stroke:0.15px #1f2937;">5 Lincoln Court</div>
<div class="t" style="left:429.00px;top:455.85px;font-size:13px;line-height:20px;color:#1f2937;transform:scaleX(0.9180);transform-origin:0 0;-webkit-text-stroke:0.15px #1f2937;">ACM-1018</div>
<div class="t" style="left:539.00px;top:455.85px;font-size:13px;line-height:20px;color:#1f2937;transform:scaleX(0.8830);transform-origin:0 0;-webkit-text-stroke:0.15px #1f2937;">Flat Floor 1</div>
<div class="t" style="left:629.00px;top:455.85px;font-size:13px;line-height:20px;color:#1f2937;transform:scaleX(0.8990);transform-origin:0 0;-webkit-text-stroke:0.15px #1f2937;">Entrance Hall</div>
<div class="t" style="left:729.00px;top:455.85px;font-size:13px;line-height:20px;color:#1f2937;transform:scaleX(0.9070);transform-origin:0 0;-webkit-text-stroke:0.15px #1f2937;">Ceiling</div>
<div class="t" style="left:869.00px;top:455.85px;font-size:13px;line-height:20px;color:#1f2937;transform:scaleX(0.9050);transform-origin:0 0;-webkit-text-stroke:0.15px #1f2937;">Textured Coating</div>
<div class="a" style="left:998px;top:447px;width:100px;height:36px;background:#17a2b8"></div>
<div class="t" style="left:1009.00px;top:455.85px;font-size:13px;line-height:20px;color:#ffffff;transform:scaleX(0.8446);transform-origin:0 0;">LOW</div>
<div class="t" style="left:1109.00px;top:455.85px;font-size:13px;line-height:20px;color:#1f2937;transform:scaleX(0.9040);transform-origin:0 0;-webkit-text-stroke:0.15px #1f2937;">Active</div>
<div class="t" style="left:1219.00px;top:455.85px;font-size:13px;line-height:20px;color:#1f2937;transform:scaleX(0.9220);transform-origin:0 0;-webkit-text-stroke:0.15px #1f2937;">17/05/2018</div>
<div class="t" style="left:1329.00px;top:455.85px;font-size:13px;line-height:20px;color:#1f2937;transform:scaleX(0.9220);transform-origin:0 0;-webkit-text-stroke:0.15px #1f2937;">17/05/2018</div>
<div class="t" style="left:1439.00px;top:455.85px;font-size:13px;line-height:20px;color:#1f2937;transform:scaleX(0.9030);transform-origin:0 0;-webkit-text-stroke:0.15px #1f2937;">Survey manual override</div>
<div class="row" style="top:484px;background:#ffffff"></div>
<div class="cb" style="left:18px;top:494px"></div>
<div class="ab" style="left:49px;top:490px"></div><span class="ic" style="left:55px;top:496px"><svg width="13" height="13" viewBox="0 0 13 13"><circle cx="4.8" cy="4.8" r="4.2" fill="none" stroke="#2f3b4f" stroke-width="1.05"/><path d="M7.9 7.9L11.6 11.6" stroke="#2f3b4f" stroke-width="1.15" stroke-linecap="round"/></svg></span>
<div class="ab" style="left:75px;top:490px"></div><span class="ic" style="left:80.5px;top:495px"><svg width="13" height="14" viewBox="0 0 13 14"><path d="M1 6.3L6.3 1.2L11.6 6.3V11.3Q11.6 12.5 10.4 12.5H8.7V9.6Q8.7 8.5 7.6 8.5H5Q3.9 8.5 3.9 9.6V12.5H2.2Q1 12.5 1 11.3Z" fill="none" stroke="#3a4354" stroke-width="1.15" stroke-linejoin="round"/></svg></span>
<div class="t" style="left:129.00px;top:492.85px;font-size:13px;line-height:20px;color:#1f2937;transform:scaleX(0.8230);transform-origin:0 0;-webkit-text-stroke:0.15px #1f2937;">LINCCRT028</div>
<div class="t" style="left:249.00px;top:492.85px;font-size:13px;line-height:20px;color:#1f2937;transform:scaleX(0.9150);transform-origin:0 0;-webkit-text-stroke:0.15px #1f2937;">28 Lincoln Court</div>
<div class="t" style="left:429.00px;top:492.85px;font-size:13px;line-height:20px;color:#1f2937;transform:scaleX(0.9180);transform-origin:0 0;-webkit-text-stroke:0.15px #1f2937;">ACM-1028</div>
<div class="t" style="left:539.00px;top:492.85px;font-size:13px;line-height:20px;color:#1f2937;transform:scaleX(0.8830);transform-origin:0 0;-webkit-text-stroke:0.15px #1f2937;">Roof</div>
<div class="t" style="left:629.00px;top:492.85px;font-size:13px;line-height:20px;color:#1f2937;transform:scaleX(0.8990);transform-origin:0 0;-webkit-text-stroke:0.15px #1f2937;">External</div>
<div class="t" style="left:729.00px;top:492.85px;font-size:13px;line-height:20px;color:#1f2937;transform:scaleX(0.9070);transform-origin:0 0;-webkit-text-stroke:0.15px #1f2937;">Soffits</div>
<div class="t" style="left:869.00px;top:492.85px;font-size:13px;line-height:20px;color:#1f2937;transform:scaleX(0.9050);transform-origin:0 0;-webkit-text-stroke:0.15px #1f2937;">Cement Sheet</div>
<div class="a" style="left:998px;top:484px;width:100px;height:36px;background:#ffc107"></div>
<div class="t" style="left:1009.00px;top:492.85px;font-size:13px;line-height:20px;color:#212529;transform:scaleX(0.8918);transform-origin:0 0;">MEDIUM</div>
<div class="t" style="left:1109.00px;top:492.85px;font-size:13px;line-height:20px;color:#1f2937;transform:scaleX(0.9040);transform-origin:0 0;-webkit-text-stroke:0.15px #1f2937;">Active</div>
<div class="t" style="left:1219.00px;top:492.85px;font-size:13px;line-height:20px;color:#1f2937;transform:scaleX(0.9220);transform-origin:0 0;-webkit-text-stroke:0.15px #1f2937;">15/05/2018</div>
<div class="t" style="left:1329.00px;top:492.85px;font-size:13px;line-height:20px;color:#1f2937;transform:scaleX(0.9220);transform-origin:0 0;-webkit-text-stroke:0.15px #1f2937;">15/05/2018</div>
<div class="t" style="left:1439.00px;top:492.85px;font-size:13px;line-height:20px;color:#1f2937;transform:scaleX(0.9030);transform-origin:0 0;-webkit-text-stroke:0.15px #1f2937;">Survey manual override</div>
<div class="row" style="top:521px;background:#f4f4f4"></div>
<div class="cb" style="left:18px;top:531px"></div>
<div class="ab" style="left:49px;top:527px"></div><span class="ic" style="left:55px;top:533px"><svg width="13" height="13" viewBox="0 0 13 13"><circle cx="4.8" cy="4.8" r="4.2" fill="none" stroke="#2f3b4f" stroke-width="1.05"/><path d="M7.9 7.9L11.6 11.6" stroke="#2f3b4f" stroke-width="1.15" stroke-linecap="round"/></svg></span>
<div class="ab" style="left:75px;top:527px"></div><span class="ic" style="left:80.5px;top:532px"><svg width="13" height="14" viewBox="0 0 13 14"><path d="M1 6.3L6.3 1.2L11.6 6.3V11.3Q11.6 12.5 10.4 12.5H8.7V9.6Q8.7 8.5 7.6 8.5H5Q3.9 8.5 3.9 9.6V12.5H2.2Q1 12.5 1 11.3Z" fill="none" stroke="#3a4354" stroke-width="1.15" stroke-linejoin="round"/></svg></span>
<div class="t" style="left:129.00px;top:529.85px;font-size:13px;line-height:20px;color:#1f2937;transform:scaleX(0.8230);transform-origin:0 0;-webkit-text-stroke:0.15px #1f2937;">LINCCRT029</div>
<div class="t" style="left:249.00px;top:529.85px;font-size:13px;line-height:20px;color:#1f2937;transform:scaleX(0.9150);transform-origin:0 0;-webkit-text-stroke:0.15px #1f2937;">29 Lincoln Court</div>
<div class="t" style="left:429.00px;top:529.85px;font-size:13px;line-height:20px;color:#1f2937;transform:scaleX(0.9180);transform-origin:0 0;-webkit-text-stroke:0.15px #1f2937;">ACM-1033</div>
<div class="t" style="left:539.00px;top:529.85px;font-size:13px;line-height:20px;color:#1f2937;transform:scaleX(0.8830);transform-origin:0 0;-webkit-text-stroke:0.15px #1f2937;">Flat Floor 1</div>
<div class="t" style="left:629.00px;top:529.85px;font-size:13px;line-height:20px;color:#1f2937;transform:scaleX(0.8990);transform-origin:0 0;-webkit-text-stroke:0.15px #1f2937;">Bathroom</div>
<div class="t" style="left:729.00px;top:529.85px;font-size:13px;line-height:20px;color:#1f2937;transform:scaleX(0.9070);transform-origin:0 0;-webkit-text-stroke:0.15px #1f2937;">Ceiling</div>
<div class="t" style="left:869.00px;top:529.85px;font-size:13px;line-height:20px;color:#1f2937;transform:scaleX(0.9050);transform-origin:0 0;-webkit-text-stroke:0.15px #1f2937;">Textured Coating</div>
<div class="a" style="left:998px;top:521px;width:100px;height:36px;background:#17a2b8"></div>
<div class="t" style="left:1009.00px;top:529.85px;font-size:13px;line-height:20px;color:#ffffff;transform:scaleX(0.8446);transform-origin:0 0;">LOW</div>
<div class="t" style="left:1109.00px;top:529.85px;font-size:13px;line-height:20px;color:#1f2937;transform:scaleX(0.9040);transform-origin:0 0;-webkit-text-stroke:0.15px #1f2937;">Active</div>
<div class="t" style="left:1219.00px;top:529.85px;font-size:13px;line-height:20px;color:#1f2937;transform:scaleX(0.9220);transform-origin:0 0;-webkit-text-stroke:0.15px #1f2937;">15/05/2018</div>
<div class="t" style="left:1329.00px;top:529.85px;font-size:13px;line-height:20px;color:#1f2937;transform:scaleX(0.9220);transform-origin:0 0;-webkit-text-stroke:0.15px #1f2937;">15/05/2018</div>
<div class="t" style="left:1439.00px;top:529.85px;font-size:13px;line-height:20px;color:#1f2937;transform:scaleX(0.9030);transform-origin:0 0;-webkit-text-stroke:0.15px #1f2937;">Survey manual override</div>
<div class="row" style="top:558px;background:#ffffff"></div>
<div class="cb" style="left:18px;top:568px"></div>
<div class="ab" style="left:49px;top:564px"></div><span class="ic" style="left:55px;top:570px"><svg width="13" height="13" viewBox="0 0 13 13"><circle cx="4.8" cy="4.8" r="4.2" fill="none" stroke="#2f3b4f" stroke-width="1.05"/><path d="M7.9 7.9L11.6 11.6" stroke="#2f3b4f" stroke-width="1.15" stroke-linecap="round"/></svg></span>
<div class="ab" style="left:75px;top:564px"></div><span class="ic" style="left:80.5px;top:569px"><svg width="13" height="14" viewBox="0 0 13 14"><path d="M1 6.3L6.3 1.2L11.6 6.3V11.3Q11.6 12.5 10.4 12.5H8.7V9.6Q8.7 8.5 7.6 8.5H5Q3.9 8.5 3.9 9.6V12.5H2.2Q1 12.5 1 11.3Z" fill="none" stroke="#3a4354" stroke-width="1.15" stroke-linejoin="round"/></svg></span>
<div class="t" style="left:129.00px;top:566.85px;font-size:13px;line-height:20px;color:#1f2937;transform:scaleX(0.8230);transform-origin:0 0;-webkit-text-stroke:0.15px #1f2937;">LINCCRT029</div>
<div class="t" style="left:249.00px;top:566.85px;font-size:13px;line-height:20px;color:#1f2937;transform:scaleX(0.9150);transform-origin:0 0;-webkit-text-stroke:0.15px #1f2937;">29 Lincoln Court</div>
<div class="t" style="left:429.00px;top:566.85px;font-size:13px;line-height:20px;color:#1f2937;transform:scaleX(0.9180);transform-origin:0 0;-webkit-text-stroke:0.15px #1f2937;">ACM-1034</div>
<div class="t" style="left:539.00px;top:566.85px;font-size:13px;line-height:20px;color:#1f2937;transform:scaleX(0.8830);transform-origin:0 0;-webkit-text-stroke:0.15px #1f2937;">Flat Floor 1</div>
<div class="t" style="left:629.00px;top:566.85px;font-size:13px;line-height:20px;color:#1f2937;transform:scaleX(0.8990);transform-origin:0 0;-webkit-text-stroke:0.15px #1f2937;">Cupboard 1</div>
<div class="t" style="left:729.00px;top:566.85px;font-size:13px;line-height:20px;color:#1f2937;transform:scaleX(0.9070);transform-origin:0 0;-webkit-text-stroke:0.15px #1f2937;">Ceiling</div>
<div class="t" style="left:869.00px;top:566.85px;font-size:13px;line-height:20px;color:#1f2937;transform:scaleX(0.9050);transform-origin:0 0;-webkit-text-stroke:0.15px #1f2937;">Textured Coating</div>
<div class="a" style="left:998px;top:558px;width:100px;height:36px;background:#28a745"></div>
<div class="t" style="left:1009.00px;top:566.85px;font-size:13px;line-height:20px;color:#ffffff;transform:scaleX(0.7917);transform-origin:0 0;">VERY_LOW</div>
<div class="t" style="left:1109.00px;top:566.85px;font-size:13px;line-height:20px;color:#1f2937;transform:scaleX(0.9040);transform-origin:0 0;-webkit-text-stroke:0.15px #1f2937;">Active</div>
<div class="t" style="left:1219.00px;top:566.85px;font-size:13px;line-height:20px;color:#1f2937;transform:scaleX(0.9220);transform-origin:0 0;-webkit-text-stroke:0.15px #1f2937;">15/05/2018</div>
<div class="t" style="left:1329.00px;top:566.85px;font-size:13px;line-height:20px;color:#1f2937;transform:scaleX(0.9220);transform-origin:0 0;-webkit-text-stroke:0.15px #1f2937;">15/05/2018</div>
<div class="t" style="left:1439.00px;top:566.85px;font-size:13px;line-height:20px;color:#1f2937;transform:scaleX(0.9030);transform-origin:0 0;-webkit-text-stroke:0.15px #1f2937;">Survey manual override</div>
<div class="row" style="top:595px;background:#f4f4f4"></div>
<div class="cb" style="left:18px;top:605px"></div>
<div class="ab" style="left:49px;top:601px"></div><span class="ic" style="left:55px;top:607px"><svg width="13" height="13" viewBox="0 0 13 13"><circle cx="4.8" cy="4.8" r="4.2" fill="none" stroke="#2f3b4f" stroke-width="1.05"/><path d="M7.9 7.9L11.6 11.6" stroke="#2f3b4f" stroke-width="1.15" stroke-linecap="round"/></svg></span>
<div class="ab" style="left:75px;top:601px"></div><span class="ic" style="left:80.5px;top:606px"><svg width="13" height="14" viewBox="0 0 13 14"><path d="M1 6.3L6.3 1.2L11.6 6.3V11.3Q11.6 12.5 10.4 12.5H8.7V9.6Q8.7 8.5 7.6 8.5H5Q3.9 8.5 3.9 9.6V12.5H2.2Q1 12.5 1 11.3Z" fill="none" stroke="#3a4354" stroke-width="1.15" stroke-linejoin="round"/></svg></span>
<div class="t" style="left:129.00px;top:603.85px;font-size:13px;line-height:20px;color:#1f2937;transform:scaleX(0.8230);transform-origin:0 0;-webkit-text-stroke:0.15px #1f2937;">LINCCRT029</div>
<div class="t" style="left:249.00px;top:603.85px;font-size:13px;line-height:20px;color:#1f2937;transform:scaleX(0.9150);transform-origin:0 0;-webkit-text-stroke:0.15px #1f2937;">29 Lincoln Court</div>
<div class="t" style="left:429.00px;top:603.85px;font-size:13px;line-height:20px;color:#1f2937;transform:scaleX(0.9180);transform-origin:0 0;-webkit-text-stroke:0.15px #1f2937;">ACM-1035</div>
<div class="t" style="left:539.00px;top:603.85px;font-size:13px;line-height:20px;color:#1f2937;transform:scaleX(0.8830);transform-origin:0 0;-webkit-text-stroke:0.15px #1f2937;">Flat Floor 1</div>
<div class="t" style="left:629.00px;top:603.85px;font-size:13px;line-height:20px;color:#1f2937;transform:scaleX(0.8990);transform-origin:0 0;-webkit-text-stroke:0.15px #1f2937;">Cupboard 2</div>
<div class="t" style="left:729.00px;top:603.85px;font-size:13px;line-height:20px;color:#1f2937;transform:scaleX(0.9070);transform-origin:0 0;-webkit-text-stroke:0.15px #1f2937;">Ceiling</div>
<div class="t" style="left:869.00px;top:603.85px;font-size:13px;line-height:20px;color:#1f2937;transform:scaleX(0.9050);transform-origin:0 0;-webkit-text-stroke:0.15px #1f2937;">Textured Coating</div>
<div class="a" style="left:998px;top:595px;width:100px;height:36px;background:#17a2b8"></div>
<div class="t" style="left:1009.00px;top:603.85px;font-size:13px;line-height:20px;color:#ffffff;transform:scaleX(0.8446);transform-origin:0 0;">LOW</div>
<div class="t" style="left:1109.00px;top:603.85px;font-size:13px;line-height:20px;color:#1f2937;transform:scaleX(0.9040);transform-origin:0 0;-webkit-text-stroke:0.15px #1f2937;">Active</div>
<div class="t" style="left:1219.00px;top:603.85px;font-size:13px;line-height:20px;color:#1f2937;transform:scaleX(0.9220);transform-origin:0 0;-webkit-text-stroke:0.15px #1f2937;">15/05/2018</div>
<div class="t" style="left:1329.00px;top:603.85px;font-size:13px;line-height:20px;color:#1f2937;transform:scaleX(0.9220);transform-origin:0 0;-webkit-text-stroke:0.15px #1f2937;">15/05/2018</div>
<div class="t" style="left:1439.00px;top:603.85px;font-size:13px;line-height:20px;color:#1f2937;transform:scaleX(0.9030);transform-origin:0 0;-webkit-text-stroke:0.15px #1f2937;">Survey manual override</div>
<div class="row" style="top:632px;background:#ffffff"></div>
<div class="cb" style="left:18px;top:642px"></div>
<div class="ab" style="left:49px;top:638px"></div><span class="ic" style="left:55px;top:644px"><svg width="13" height="13" viewBox="0 0 13 13"><circle cx="4.8" cy="4.8" r="4.2" fill="none" stroke="#2f3b4f" stroke-width="1.05"/><path d="M7.9 7.9L11.6 11.6" stroke="#2f3b4f" stroke-width="1.15" stroke-linecap="round"/></svg></span>
<div class="ab" style="left:75px;top:638px"></div><span class="ic" style="left:80.5px;top:643px"><svg width="13" height="14" viewBox="0 0 13 14"><path d="M1 6.3L6.3 1.2L11.6 6.3V11.3Q11.6 12.5 10.4 12.5H8.7V9.6Q8.7 8.5 7.6 8.5H5Q3.9 8.5 3.9 9.6V12.5H2.2Q1 12.5 1 11.3Z" fill="none" stroke="#3a4354" stroke-width="1.15" stroke-linejoin="round"/></svg></span>
<div class="t" style="left:129.00px;top:640.85px;font-size:13px;line-height:20px;color:#1f2937;transform:scaleX(0.8230);transform-origin:0 0;-webkit-text-stroke:0.15px #1f2937;">LINCCRT029</div>
<div class="t" style="left:249.00px;top:640.85px;font-size:13px;line-height:20px;color:#1f2937;transform:scaleX(0.9150);transform-origin:0 0;-webkit-text-stroke:0.15px #1f2937;">29 Lincoln Court</div>
<div class="t" style="left:429.00px;top:640.85px;font-size:13px;line-height:20px;color:#1f2937;transform:scaleX(0.9180);transform-origin:0 0;-webkit-text-stroke:0.15px #1f2937;">ACM-1036</div>
<div class="t" style="left:539.00px;top:640.85px;font-size:13px;line-height:20px;color:#1f2937;transform:scaleX(0.8830);transform-origin:0 0;-webkit-text-stroke:0.15px #1f2937;">Flat Floor 1</div>
<div class="t" style="left:629.00px;top:640.85px;font-size:13px;line-height:20px;color:#1f2937;transform:scaleX(0.8990);transform-origin:0 0;-webkit-text-stroke:0.15px #1f2937;">Cupboard 3</div>
<div class="t" style="left:729.00px;top:640.85px;font-size:13px;line-height:20px;color:#1f2937;transform:scaleX(0.9070);transform-origin:0 0;-webkit-text-stroke:0.15px #1f2937;">Ceiling</div>
<div class="t" style="left:869.00px;top:640.85px;font-size:13px;line-height:20px;color:#1f2937;transform:scaleX(0.9050);transform-origin:0 0;-webkit-text-stroke:0.15px #1f2937;">Textured Coating</div>
<div class="a" style="left:998px;top:632px;width:100px;height:36px;background:#28a745"></div>
<div class="t" style="left:1009.00px;top:640.85px;font-size:13px;line-height:20px;color:#ffffff;transform:scaleX(0.7917);transform-origin:0 0;">VERY_LOW</div>
<div class="t" style="left:1109.00px;top:640.85px;font-size:13px;line-height:20px;color:#1f2937;transform:scaleX(0.9040);transform-origin:0 0;-webkit-text-stroke:0.15px #1f2937;">Active</div>
<div class="t" style="left:1219.00px;top:640.85px;font-size:13px;line-height:20px;color:#1f2937;transform:scaleX(0.9220);transform-origin:0 0;-webkit-text-stroke:0.15px #1f2937;">15/05/2018</div>
<div class="t" style="left:1329.00px;top:640.85px;font-size:13px;line-height:20px;color:#1f2937;transform:scaleX(0.9220);transform-origin:0 0;-webkit-text-stroke:0.15px #1f2937;">15/05/2018</div>
<div class="t" style="left:1439.00px;top:640.85px;font-size:13px;line-height:20px;color:#1f2937;transform:scaleX(0.9030);transform-origin:0 0;-webkit-text-stroke:0.15px #1f2937;">Survey manual override</div>
<div class="row" style="top:669px;background:#f4f4f4"></div>
<div class="cb" style="left:18px;top:679px"></div>
<div class="ab" style="left:49px;top:675px"></div><span class="ic" style="left:55px;top:681px"><svg width="13" height="13" viewBox="0 0 13 13"><circle cx="4.8" cy="4.8" r="4.2" fill="none" stroke="#2f3b4f" stroke-width="1.05"/><path d="M7.9 7.9L11.6 11.6" stroke="#2f3b4f" stroke-width="1.15" stroke-linecap="round"/></svg></span>
<div class="ab" style="left:75px;top:675px"></div><span class="ic" style="left:80.5px;top:680px"><svg width="13" height="14" viewBox="0 0 13 14"><path d="M1 6.3L6.3 1.2L11.6 6.3V11.3Q11.6 12.5 10.4 12.5H8.7V9.6Q8.7 8.5 7.6 8.5H5Q3.9 8.5 3.9 9.6V12.5H2.2Q1 12.5 1 11.3Z" fill="none" stroke="#3a4354" stroke-width="1.15" stroke-linejoin="round"/></svg></span>
<div class="t" style="left:129.00px;top:677.85px;font-size:13px;line-height:20px;color:#1f2937;transform:scaleX(0.8230);transform-origin:0 0;-webkit-text-stroke:0.15px #1f2937;">LINCCRT029</div>
<div class="t" style="left:249.00px;top:677.85px;font-size:13px;line-height:20px;color:#1f2937;transform:scaleX(0.9150);transform-origin:0 0;-webkit-text-stroke:0.15px #1f2937;">29 Lincoln Court</div>
<div class="t" style="left:429.00px;top:677.85px;font-size:13px;line-height:20px;color:#1f2937;transform:scaleX(0.9180);transform-origin:0 0;-webkit-text-stroke:0.15px #1f2937;">ACM-1037</div>
<div class="t" style="left:539.00px;top:677.85px;font-size:13px;line-height:20px;color:#1f2937;transform:scaleX(0.8830);transform-origin:0 0;-webkit-text-stroke:0.15px #1f2937;">Flat Floor 1</div>
<div class="t" style="left:629.00px;top:677.85px;font-size:13px;line-height:20px;color:#1f2937;transform:scaleX(0.8990);transform-origin:0 0;-webkit-text-stroke:0.15px #1f2937;">Entrance Hall</div>
<div class="t" style="left:729.00px;top:677.85px;font-size:13px;line-height:20px;color:#1f2937;transform:scaleX(0.9070);transform-origin:0 0;-webkit-text-stroke:0.15px #1f2937;">Ceiling</div>
<div class="t" style="left:869.00px;top:677.85px;font-size:13px;line-height:20px;color:#1f2937;transform:scaleX(0.9050);transform-origin:0 0;-webkit-text-stroke:0.15px #1f2937;">Textured Coating</div>
<div class="a" style="left:998px;top:669px;width:100px;height:36px;background:#17a2b8"></div>
<div class="t" style="left:1009.00px;top:677.85px;font-size:13px;line-height:20px;color:#ffffff;transform:scaleX(0.8446);transform-origin:0 0;">LOW</div>
<div class="t" style="left:1109.00px;top:677.85px;font-size:13px;line-height:20px;color:#1f2937;transform:scaleX(0.9040);transform-origin:0 0;-webkit-text-stroke:0.15px #1f2937;">Active</div>
<div class="t" style="left:1219.00px;top:677.85px;font-size:13px;line-height:20px;color:#1f2937;transform:scaleX(0.9220);transform-origin:0 0;-webkit-text-stroke:0.15px #1f2937;">15/05/2018</div>
<div class="t" style="left:1329.00px;top:677.85px;font-size:13px;line-height:20px;color:#1f2937;transform:scaleX(0.9220);transform-origin:0 0;-webkit-text-stroke:0.15px #1f2937;">15/05/2018</div>
<div class="t" style="left:1439.00px;top:677.85px;font-size:13px;line-height:20px;color:#1f2937;transform:scaleX(0.9030);transform-origin:0 0;-webkit-text-stroke:0.15px #1f2937;">Survey manual override</div>
<div class="row" style="top:706px;background:#ffffff"></div>
<div class="cb" style="left:18px;top:716px"></div>
<div class="ab" style="left:49px;top:712px"></div><span class="ic" style="left:55px;top:718px"><svg width="13" height="13" viewBox="0 0 13 13"><circle cx="4.8" cy="4.8" r="4.2" fill="none" stroke="#2f3b4f" stroke-width="1.05"/><path d="M7.9 7.9L11.6 11.6" stroke="#2f3b4f" stroke-width="1.15" stroke-linecap="round"/></svg></span>
<div class="ab" style="left:75px;top:712px"></div><span class="ic" style="left:80.5px;top:717px"><svg width="13" height="14" viewBox="0 0 13 14"><path d="M1 6.3L6.3 1.2L11.6 6.3V11.3Q11.6 12.5 10.4 12.5H8.7V9.6Q8.7 8.5 7.6 8.5H5Q3.9 8.5 3.9 9.6V12.5H2.2Q1 12.5 1 11.3Z" fill="none" stroke="#3a4354" stroke-width="1.15" stroke-linejoin="round"/></svg></span>
<div class="t" style="left:129.00px;top:714.85px;font-size:13px;line-height:20px;color:#1f2937;transform:scaleX(0.8230);transform-origin:0 0;-webkit-text-stroke:0.15px #1f2937;">LINCCRT029</div>
<div class="t" style="left:249.00px;top:714.85px;font-size:13px;line-height:20px;color:#1f2937;transform:scaleX(0.9150);transform-origin:0 0;-webkit-text-stroke:0.15px #1f2937;">29 Lincoln Court</div>
<div class="t" style="left:429.00px;top:714.85px;font-size:13px;line-height:20px;color:#1f2937;transform:scaleX(0.9180);transform-origin:0 0;-webkit-text-stroke:0.15px #1f2937;">ACM-1039</div>
<div class="t" style="left:539.00px;top:714.85px;font-size:13px;line-height:20px;color:#1f2937;transform:scaleX(0.8830);transform-origin:0 0;-webkit-text-stroke:0.15px #1f2937;">Roof</div>
<div class="t" style="left:629.00px;top:714.85px;font-size:13px;line-height:20px;color:#1f2937;transform:scaleX(0.8990);transform-origin:0 0;-webkit-text-stroke:0.15px #1f2937;">External</div>
<div class="t" style="left:729.00px;top:714.85px;font-size:13px;line-height:20px;color:#1f2937;transform:scaleX(0.9070);transform-origin:0 0;-webkit-text-stroke:0.15px #1f2937;">Soffits</div>
<div class="t" style="left:869.00px;top:714.85px;font-size:13px;line-height:20px;color:#1f2937;transform:scaleX(0.9050);transform-origin:0 0;-webkit-text-stroke:0.15px #1f2937;">Cement Soffits</div>
<div class="a" style="left:998px;top:706px;width:100px;height:36px;background:#ffc107"></div>
<div class="t" style="left:1009.00px;top:714.85px;font-size:13px;line-height:20px;color:#212529;transform:scaleX(0.8918);transform-origin:0 0;">MEDIUM</div>
<div class="t" style="left:1109.00px;top:714.85px;font-size:13px;line-height:20px;color:#1f2937;transform:scaleX(0.9040);transform-origin:0 0;-webkit-text-stroke:0.15px #1f2937;">Active</div>
<div class="t" style="left:1219.00px;top:714.85px;font-size:13px;line-height:20px;color:#1f2937;transform:scaleX(0.9220);transform-origin:0 0;-webkit-text-stroke:0.15px #1f2937;">15/05/2018</div>
<div class="t" style="left:1329.00px;top:714.85px;font-size:13px;line-height:20px;color:#1f2937;transform:scaleX(0.9220);transform-origin:0 0;-webkit-text-stroke:0.15px #1f2937;">15/05/2018</div>
<div class="t" style="left:1439.00px;top:714.85px;font-size:13px;line-height:20px;color:#1f2937;transform:scaleX(0.9030);transform-origin:0 0;-webkit-text-stroke:0.15px #1f2937;">Survey manual override</div>
<div class="row" style="top:743px;background:#f4f4f4"></div>
<div class="cb" style="left:18px;top:753px"></div>
<div class="ab" style="left:49px;top:749px"></div><span class="ic" style="left:55px;top:755px"><svg width="13" height="13" viewBox="0 0 13 13"><circle cx="4.8" cy="4.8" r="4.2" fill="none" stroke="#2f3b4f" stroke-width="1.05"/><path d="M7.9 7.9L11.6 11.6" stroke="#2f3b4f" stroke-width="1.15" stroke-linecap="round"/></svg></span>
<div class="ab" style="left:75px;top:749px"></div><span class="ic" style="left:80.5px;top:754px"><svg width="13" height="14" viewBox="0 0 13 14"><path d="M1 6.3L6.3 1.2L11.6 6.3V11.3Q11.6 12.5 10.4 12.5H8.7V9.6Q8.7 8.5 7.6 8.5H5Q3.9 8.5 3.9 9.6V12.5H2.2Q1 12.5 1 11.3Z" fill="none" stroke="#3a4354" stroke-width="1.15" stroke-linejoin="round"/></svg></span>
<div class="t" style="left:129.00px;top:751.85px;font-size:13px;line-height:20px;color:#1f2937;transform:scaleX(0.8230);transform-origin:0 0;-webkit-text-stroke:0.15px #1f2937;">LINCCRT030</div>
<div class="t" style="left:249.00px;top:751.85px;font-size:13px;line-height:20px;color:#1f2937;transform:scaleX(0.9150);transform-origin:0 0;-webkit-text-stroke:0.15px #1f2937;">30 Lincoln Court</div>
<div class="t" style="left:429.00px;top:751.85px;font-size:13px;line-height:20px;color:#1f2937;transform:scaleX(0.9180);transform-origin:0 0;-webkit-text-stroke:0.15px #1f2937;">ACM-1040</div>
<div class="t" style="left:539.00px;top:751.85px;font-size:13px;line-height:20px;color:#1f2937;transform:scaleX(0.8830);transform-origin:0 0;-webkit-text-stroke:0.15px #1f2937;">Flat Floor 1</div>
<div class="t" style="left:629.00px;top:751.85px;font-size:13px;line-height:20px;color:#1f2937;transform:scaleX(0.8990);transform-origin:0 0;-webkit-text-stroke:0.15px #1f2937;">Kitchen</div>
<div class="t" style="left:729.00px;top:751.85px;font-size:13px;line-height:20px;color:#1f2937;transform:scaleX(0.9070);transform-origin:0 0;-webkit-text-stroke:0.15px #1f2937;">Ceiling</div>
<div class="t" style="left:869.00px;top:751.85px;font-size:13px;line-height:20px;color:#1f2937;transform:scaleX(0.9050);transform-origin:0 0;-webkit-text-stroke:0.15px #1f2937;">Textured Coating</div>
<div class="a" style="left:998px;top:743px;width:100px;height:36px;background:#17a2b8"></div>
<div class="t" style="left:1009.00px;top:751.85px;font-size:13px;line-height:20px;color:#ffffff;transform:scaleX(0.8446);transform-origin:0 0;">LOW</div>
<div class="t" style="left:1109.00px;top:751.85px;font-size:13px;line-height:20px;color:#1f2937;transform:scaleX(0.9040);transform-origin:0 0;-webkit-text-stroke:0.15px #1f2937;">Active</div>
<div class="t" style="left:1219.00px;top:751.85px;font-size:13px;line-height:20px;color:#1f2937;transform:scaleX(0.9220);transform-origin:0 0;-webkit-text-stroke:0.15px #1f2937;">15/05/2018</div>
<div class="t" style="left:1329.00px;top:751.85px;font-size:13px;line-height:20px;color:#1f2937;transform:scaleX(0.9220);transform-origin:0 0;-webkit-text-stroke:0.15px #1f2937;">15/05/2018</div>
<div class="t" style="left:1439.00px;top:751.85px;font-size:13px;line-height:20px;color:#1f2937;transform:scaleX(0.9030);transform-origin:0 0;-webkit-text-stroke:0.15px #1f2937;">Survey manual override</div>
<div class="a" style="left:116px;top:176px;width:2px;height:603px;background:#e2e6f0"></div>
<div class="a" style="left:1595px;top:274px;width:2px;height:256px;background:#6b6b6b"></div>
<div class="a" style="left:26px;top:774px;width:1185px;height:2px;background:#888"></div>
<div class="t" style="left:249.30px;top:792.85px;font-size:13px;line-height:20px;font-weight:bold;color:#4b5563;transform:scaleX(0.9261);transform-origin:0 0;">Total: 5989</div>
<div class="a" style="left:13px;top:824px;width:1587px;height:1px;background:#e3e7ef"></div>
<div class="a" style="left:66px;top:837px;width:37px;height:30px;background:#fe5722;border-radius:50%"></div>
<div class="t" style="left:35.85px;top:842.85px;font-size:13px;line-height:20px;color:#1f2937;transform:scaleX(0.9200);transform-origin:0 0;">10</div>
<div class="t" style="left:77.85px;top:842.85px;font-size:13px;line-height:20px;color:#ffffff;transform:scaleX(0.9200);transform-origin:0 0;">25</div>
<div class="t" style="left:119.35px;top:842.85px;font-size:13px;line-height:20px;color:#1f2937;transform:scaleX(0.9200);transform-origin:0 0;">50</div>
<div class="t" style="left:161.52px;top:842.85px;font-size:13px;line-height:20px;color:#1f2937;transform:scaleX(0.9200);transform-origin:0 0;">100</div>
<div class="t" style="left:1111.80px;top:842.85px;font-size:13px;line-height:20px;color:#5b6573;transform:scaleX(0.8929);transform-origin:0 0;">Page 1 of 240 (5989 items)</div>
<svg class="a" style="left:1274px;top:846px" width="8" height="12" viewBox="0 0 8 12"><path d="M6 1L1.5 6L6 11" fill="none" stroke="#c3c8d0" stroke-width="1.2"/></svg>
<div class="a" style="left:1299px;top:837px;width:30px;height:30px;background:#fe5722;border-radius:50%"></div>
<div class="t" style="left:1310.66px;top:842.85px;font-size:13px;line-height:20px;color:#ffffff;transform:scaleX(0.9200);transform-origin:0 0;">1</div>
<div class="t" style="left:1347.16px;top:842.85px;font-size:13px;line-height:20px;color:#1f2937;transform:scaleX(0.9200);transform-origin:0 0;">2</div>
<div class="t" style="left:1383.37px;top:842.85px;font-size:13px;line-height:20px;color:#1f2937;transform:scaleX(0.9200);transform-origin:0 0;">3</div>
<div class="t" style="left:1419.96px;top:842.85px;font-size:13px;line-height:20px;color:#1f2937;transform:scaleX(0.9200);transform-origin:0 0;">4</div>
<div class="t" style="left:1456.87px;top:842.85px;font-size:13px;line-height:20px;color:#1f2937;transform:scaleX(0.9200);transform-origin:0 0;">5</div>
<div class="t" style="left:1523.02px;top:842.85px;font-size:13px;line-height:20px;color:#1f2937;transform:scaleX(0.9200);transform-origin:0 0;">240</div>
<svg class="a" style="left:1480px;top:850px" width="24" height="10" viewBox="0 0 24 10"><rect x="4.8" y="4.6" width="1.4" height="2.2" fill="#27324a"/><rect x="11" y="4.6" width="1.4" height="2.2" fill="#27324a"/><rect x="17.4" y="4.6" width="1.4" height="2.2" fill="#27324a"/></svg>
<svg class="a" style="left:1569px;top:846px" width="8" height="12" viewBox="0 0 8 12"><path d="M1.3 1.3L6.2 6L1.3 10.7" fill="none" stroke="#27324a" stroke-width="1"/></svg>
<svg class="a" style="left:0;top:0" width="1613" height="891" viewBox="0 0 1613 891">
<rect x="39" y="298" width="43" height="38" fill="none" stroke="#004ee0" stroke-width="8"/>
<path d="M86 322L126 311L122.5 327L324 362.2L323 369.8L121.5 334.5L119 349Z" fill="#004ee0"/>
</svg>
</body></html>
